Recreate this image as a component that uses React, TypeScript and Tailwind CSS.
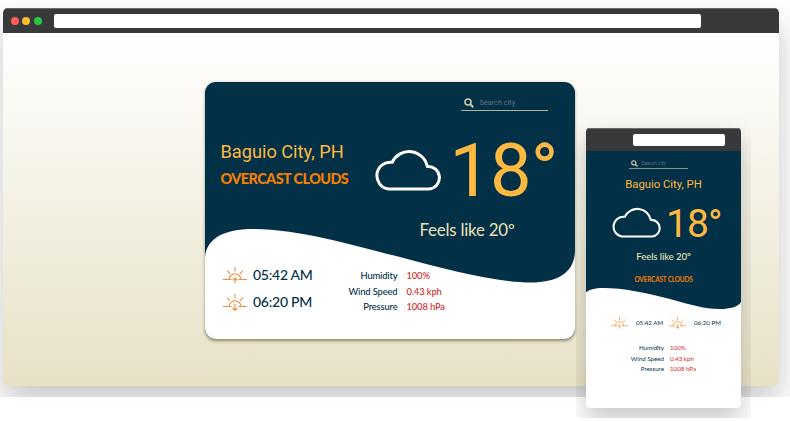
import React from "react";

function Cloud({ className, stroke }: { className: string; stroke: number }) {
  return (
    <svg className={className} viewBox="0 0 66 42" fill="none" stroke="#fff" strokeWidth={stroke} strokeLinejoin="round">
      <path d="M13.5 40 H54 A11.2 11.2 0 0 0 52.3 17.5 A18.6 18.6 0 0 0 17.2 13.3 A13.4 13.4 0 0 0 13.5 40 Z" />
    </svg>
  );
}

function SearchIcon({ className }: { className: string }) {
  return (
    <svg className={className} viewBox="0 0 10 10" fill="none" stroke="#cdc9a5">
      <circle cx="4" cy="4" r="3" strokeWidth="1.6" />
      <path d="M6.2 6.2 L9.3 9.3" strokeWidth="2" />
    </svg>
  );
}

function Sun({ className, down, color }: { className: string; down?: boolean; color: string }) {
  return (
    <svg className={className} viewBox="0 0 24 17" fill="none" stroke={color} strokeWidth="1.1">
      <path d="M0 12.5 H8.5 M15.5 12.5 H24 M6.2 12.5 A5.8 5.8 0 0 1 17.8 12.5 M12 0 V4.6 M4 3.7 L7 6.8 M20 3.7 L17 6.8" />
      {down ? <path d="M12 10 V16.2 M9.7 14 L12 16.3 L14.3 14" /> : <path d="M12 16.5 V11.3 M9.7 13.4 L12 11.1 L14.3 13.4" />}
    </svg>
  );
}

function Desktop() {
  return (
    <div className="h-[397px] overflow-hidden pl-[3px] pt-2">
      <div className="flex h-[378px] w-[776px] flex-col overflow-hidden rounded-[5px] shadow-[0_16px_32px_rgba(0,0,0,0.22)]">
        <div className="flex h-[25px] shrink-0 items-center border-t border-[#6b6b6b] bg-[#38393b] pl-[7.5px]">
          <div className="flex gap-[3.5px]">
            <span className="size-2 rounded-full bg-[#ff5f57]" />
            <span className="size-2 rounded-full bg-[#febc2e]" />
            <span className="size-2 rounded-full bg-[#28c840]" />
          </div>
          <div className="ml-[12.8px] h-3.5 w-[647px] rounded-[2px] bg-white" />
        </div>
        <div className="flex flex-1 flex-col bg-linear-to-b from-white to-[#e7e1c6] pt-[49px]">
          <div className="relative ml-[201.5px] h-[257px] w-[370px] shrink-0 overflow-hidden rounded-[11px] bg-[#023047] shadow-[0_1.5px_3px_rgba(60,50,10,0.5)]">
            <svg className="absolute inset-0 size-full" viewBox="0 0 370 257" preserveAspectRatio="none">
              <path d="M0 176 C1 157 18 147 48 147 C95 147 150 164 195 175 C240 187 290 200.5 326 200.5 C352 200.5 370 191 370 168 V257 H0 Z" fill="#fff" />
            </svg>
            <div className="relative flex h-full flex-col">
              <div className="ml-[256px] mt-[14px] flex h-[15px] w-[87px] items-center border-b border-[#b5b294] pl-[3px]">
                <SearchIcon className="size-[10px]" />
                <span className="ml-[6px] font-[Roboto,sans-serif] text-[7.3px] leading-none text-[#667477]">Search city</span>
              </div>
              <div className="flex h-[108px]">
                <div className="w-[170px] pl-4 pt-[28px]">
                  <div className="whitespace-nowrap font-[Roboto,sans-serif] text-[18.2px] leading-[25px] text-[#ffb940]">Baguio City, PH</div>
                  <div className="mt-[4px] whitespace-nowrap font-[Lato,sans-serif] text-[14.4px] font-black leading-[22px] tracking-[-0.55px] text-[#f77f00]">OVERCAST CLOUDS</div>
                </div>
                <Cloud className="mt-[38px] h-[42px] w-[66px] shrink-0" stroke={3} />
                <div className="ml-[9px] mt-[18px] font-[Roboto,sans-serif] text-[74px] leading-[84px] tracking-[-1px] text-[#ffb940]">18°</div>
              </div>
              <div className="ml-[215px] mt-[1px] font-[Lato,sans-serif] text-[16.9px] leading-[20px] tracking-[-0.22px] text-[#eae2b7]">Feels like 20º</div>
              <div className="mt-[25px] flex items-start font-[Lato,sans-serif] text-[#023047]">
                <div className="ml-[18px] w-[120px] text-[14px] font-medium leading-[19px] tracking-[-0.25px]">
                  <div className="flex h-[27px] gap-[6.5px]"><Sun className="mt-[1.5px] h-[17px] w-6" color="#f7883a" /><span>05:42 AM</span></div>
                  <div className="flex h-[27px] gap-[6.5px]"><Sun className="mt-[1.5px] h-[17px] w-6" color="#f7883a" down /><span>06:20 PM</span></div>
                </div>
                <div className="mt-[3px] grid w-[120px] grid-cols-[55px_1fr] gap-x-[9px] text-[9.4px] font-medium leading-[15.5px] tracking-[-0.14px]">
                  <span className="whitespace-nowrap text-right">Humidity</span><span className="text-[#d62828]">100%</span>
                  <span className="whitespace-nowrap text-right">Wind Speed</span><span className="text-[#d62828]">0.43 kph</span>
                  <span className="text-right">Pressure</span><span className="text-[#d62828]">1008 hPa</span>
                </div>
              </div>
            </div>
          </div>
          <div className="ml-[155px] mt-[36px] flex w-[480px] justify-between font-[Lato,sans-serif] text-[7px] leading-[10px] text-[#e9e1b9]">
            <span className="w-[387px]">©2021 Schembri</span>
            <span className="whitespace-nowrap">©OpenWeatherMap</span>
          </div>
        </div>
      </div>
    </div>
  );
}

function Phone() {
  return (
    <div className="absolute left-[576px] top-[118px] h-[300px] w-[175px] overflow-hidden pl-[10px] pt-[10px]">
      <div className="flex h-[280px] w-[155px] flex-col overflow-hidden rounded-[4px] bg-white shadow-[0_12px_24px_rgba(0,0,0,0.22)]">
        <div className="flex h-[23px] shrink-0 items-center border-t border-[#6b6b6b] bg-[#38393b] pl-[47px]">
          <div className="h-3 w-[92px] rounded-[2px] bg-white" />
        </div>
        <div className="relative h-[158px] bg-[#023047]">
          <svg className="absolute bottom-0 left-0 h-[24px] w-full" viewBox="0 0 155 24" preserveAspectRatio="none">
            <path d="M0 7.5 C3 4.5 9 3 17 3 C38 3 60 8 82 13.5 C102 19 118 24 134 24 C144 24 152 22 155 17 V25 H0 Z" fill="#fff" />
          </svg>
          <div className="relative flex flex-col items-center">
            <div className="ml-[42.5px] mt-[8px] flex h-[10px] w-[59px] items-center self-start border-b border-[#8c9488] pl-[2px]">
              <SearchIcon className="size-[7px]" />
              <span className="ml-[4px] font-[Roboto,sans-serif] text-[5px] leading-none text-[#5d6d73]">Search city</span>
            </div>
            <div className="mt-[9px] font-[Roboto,sans-serif] text-[11.3px] leading-[14px] text-[#ffb940]">Baguio City, PH</div>
            <div className="ml-[26px] flex h-[52px] self-start">
              <Cloud className="mt-[15px] h-[31px] w-[49px]" stroke={2.8} />
              <div className="ml-[5px] mt-[9px] font-[Roboto,sans-serif] text-[39px] leading-[46px] tracking-[-0.9px] text-[#ffb940]">18°</div>
            </div>
            <div className="mt-[7px] font-[Lato,sans-serif] text-[9.6px] font-medium leading-[12px] tracking-[-0.1px] text-[#eae2b7]">Feels like 20º</div>
            <div className="mt-[12px] font-[Lato,sans-serif] text-[6.5px] font-bold leading-[9px] tracking-[-0.2px] text-[#f77f00]">OVERCAST CLOUDS</div>
          </div>
        </div>
        <div className="flex flex-col font-[Lato,sans-serif] text-[6.2px] text-[#023047]">
          <div className="ml-[25px] mt-[8px] flex h-[12px] items-center leading-[12px]">
            <Sun className="h-[12px] w-[17px]" color="#f99235" /><span className="ml-[8px] w-[28px] whitespace-nowrap">05:42 AM</span>
            <Sun className="ml-[5px] h-[12px] w-[17px]" color="#f99235" down /><span className="ml-[8px] whitespace-nowrap">06:20 PM</span>
          </div>
          <div className="mt-[14px] grid grid-cols-[78px_1fr] gap-x-[6px] leading-[10.6px]">
            <span className="text-right">Humidity</span><span className="text-[#d62828]">100%</span>
            <span className="text-right">Wind Speed</span><span className="text-[#d62828]">0.43 kph</span>
            <span className="text-right">Pressure</span><span className="text-[#d62828]">1008 hPa</span>
          </div>
        </div>
      </div>
    </div>
  );
}

export default function App() {
  return (
    <main className="relative h-[421px] w-[790px] overflow-hidden bg-white">
      <Desktop />
      <Phone />
    </main>
  );
}
